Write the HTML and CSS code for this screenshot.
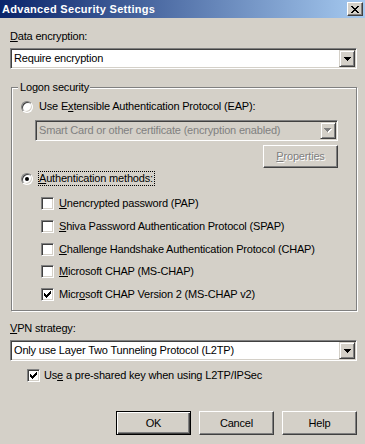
FILE: index.html
```html
<!DOCTYPE html>
<html lang="en">
<head>
<meta charset="utf-8">
<title>Advanced Security Settings</title>
<link rel="stylesheet" href="styles.css">
</head>
<body>
<div class="window">
  <div class="titlebar">
    <span class="title">Advanced Security Settings</span>
    <span class="close">
      <svg width="8" height="7" viewBox="0 0 8 7" shape-rendering="crispEdges"><path fill="#000" d="M0 0h2v1h-2z M6 0h2v1h-2z M1 1h2v1h-2z M5 1h2v1h-2z M2 2h4v1h-4z M3 3h2v1h-2z M2 4h4v1h-4z M1 5h2v1h-2z M5 5h2v1h-2z M0 6h2v1h-2z M6 6h2v1h-2z"/></svg>
    </span>
  </div>
  <div class="client">
    <div class="label"><u>D</u>ata encryption:</div>
    <div class="combo">
      <span class="combo-text">Require encryption</span>
      <span class="combo-btn"><svg width="7" height="4" viewBox="0 0 7 4" shape-rendering="crispEdges"><path fill="#000" d="M0 0h7v1h-7z M1 1h5v1h-5z M2 2h3v1h-3z M3 3h1v1h-1z"/></svg></span>
    </div>

    <div class="group">
      <span class="legend">Logon security</span>
      <div class="opt-row">
        <span class="radio"></span>
        <span>Use E<u>x</u>tensible Authentication Protocol (EAP):</span>
      </div>
      <div class="combo combo-eap disabled">
        <span class="combo-text">Smart Card or other certificate (encryption enabled)</span>
        <span class="combo-btn"><svg width="8" height="5" viewBox="0 0 8 5" shape-rendering="crispEdges"><path fill="#fff" d="M1 1h7v1h-7z M2 2h5v1h-5z M3 3h3v1h-3z M4 4h1v1h-1z"/><path fill="#808080" d="M0 0h7v1h-7z M1 1h5v1h-5z M2 2h3v1h-3z M3 3h1v1h-1z"/></svg></span>
      </div>
      <div class="prop-row">
        <span class="btn disabled"><u>P</u>roperties</span>
      </div>
      <div class="opt-row auth-row">
        <span class="radio checked"></span>
        <span class="focus"><u>A</u>uthentication methods:</span>
      </div>
      <div class="methods">
        <div class="opt-row"><span class="check"></span><span><u>U</u>nencrypted password (PAP)</span></div>
        <div class="opt-row"><span class="check"></span><span><u>S</u>hiva Password Authentication Protocol (SPAP)</span></div>
        <div class="opt-row"><span class="check"></span><span><u>C</u>hallenge Handshake Authentication Protocol (CHAP)</span></div>
        <div class="opt-row"><span class="check"></span><span><u>M</u>icrosoft CHAP (MS-CHAP)</span></div>
        <div class="opt-row"><span class="check"><svg width="7" height="7" viewBox="0 0 7 7" shape-rendering="crispEdges"><path fill="#000" d="M0 2h1v3h-1z M1 3h1v3h-1z M2 4h1v3h-1z M3 3h1v3h-1z M4 2h1v3h-1z M5 1h1v3h-1z M6 0h1v3h-1z"/></svg></span><span>Micr<u>o</u>soft CHAP Version 2 (MS-CHAP v2)</span></div>
      </div>
    </div>

    <div class="label vpn-label"><u>V</u>PN strategy:</div>
    <div class="combo">
      <span class="combo-text">Only use Layer Two Tunneling Protocol (L2TP)</span>
      <span class="combo-btn"><svg width="7" height="4" viewBox="0 0 7 4" shape-rendering="crispEdges"><path fill="#000" d="M0 0h7v1h-7z M1 1h5v1h-5z M2 2h3v1h-3z M3 3h1v1h-1z"/></svg></span>
    </div>
    <div class="opt-row psk-row">
      <span class="check"><svg width="7" height="7" viewBox="0 0 7 7" shape-rendering="crispEdges"><path fill="#000" d="M0 2h1v3h-1z M1 3h1v3h-1z M2 4h1v3h-1z M3 3h1v3h-1z M4 2h1v3h-1z M5 1h1v3h-1z M6 0h1v3h-1z"/></svg></span>
      <span>Us<u>e</u> a pre-shared key when using L2TP/IPSec</span>
    </div>

    <div class="buttons">
      <span class="btn default">OK</span>
      <span class="btn">Cancel</span>
      <span class="btn">Help</span>
    </div>
  </div>
</div>
</body>
</html>
```
FILE: styles.css
```css
html, body {
  margin: 0;
  padding: 0;
  background: #D4D0C8;
}

body {
  font-family: "Liberation Sans", Arial, sans-serif;
  font-size: 11px;
  letter-spacing: -0.18px;
  color: #000;
}

u {
  text-decoration: underline;
  text-underline-offset: 1px;
}

.window {
  width: 365px;
  height: 444px;
  background: #D4D0C8;
  overflow: hidden;
}

.titlebar {
  height: 18px;
  display: flex;
  align-items: center;
  justify-content: space-between;
  padding: 0 2px 0 2px;
  background: linear-gradient(to right, #0A246A, #A6CAF0);
}

.title {
  color: #fff;
  font-weight: bold;
  letter-spacing: 0.3px;
  line-height: 18px;
}

.close {
  width: 16px;
  height: 14px;
  box-sizing: border-box;
  background: #D4D0C8;
  border: 1px solid;
  border-color: #fff #404040 #404040 #fff;
  box-shadow: inset -1px -1px #808080;
  display: flex;
  align-items: center;
  justify-content: center;
}

.client {
  padding: 12px 8px 0 10px;
}

.label {
  height: 13px;
  line-height: 13px;
}

.combo {
  margin-top: 5px;
  height: 21px;
  box-sizing: border-box;
  border: 1px solid;
  border-color: #808080 #fff #fff #808080;
  box-shadow: inset 1px 1px #404040, inset -1px -1px #D4D0C8;
  background: #fff;
  padding: 1px;
  display: flex;
  align-items: center;
}

.combo-text {
  flex: 1;
  padding-left: 2px;
  line-height: 13px;
  white-space: nowrap;
  overflow: hidden;
}

.combo-btn {
  width: 16px;
  height: 17px;
  box-sizing: border-box;
  background: #D4D0C8;
  border: 1px solid;
  border-color: #D4D0C8 #404040 #404040 #D4D0C8;
  box-shadow: inset 1px 1px #fff, inset -1px -1px #808080;
  display: flex;
  align-items: center;
  justify-content: center;
}

.combo-btn svg {
  display: block;
}

.combo.disabled {
  background: #D4D0C8;
  color: #808080;
}

.group {
  position: relative;
  margin: 18px 0 0 1px;
  border: 1px solid #808080;
  box-shadow: 1px 1px 0 #fff, inset 1px 1px 0 #fff;
  padding: 12px 0 9px 9px;
}

.legend {
  position: absolute;
  top: -7px;
  left: 6px;
  padding: 0 1px 0 2px;
  line-height: 13px;
  background: #D4D0C8;
}

.opt-row {
  display: flex;
  align-items: center;
  height: 13px;
  line-height: 13px;
  gap: 6px;
  white-space: nowrap;
}

.radio {
  width: 12px;
  height: 12px;
  box-sizing: border-box;
  border-radius: 50%;
  border: 1px solid;
  border-color: #808080 #fff #fff #808080;
  box-shadow: inset 1px 1px #404040, inset -1px -1px #D4D0C8;
  background: #fff;
  display: flex;
  align-items: center;
  justify-content: center;
  flex: none;
}

.radio.checked::after {
  content: "";
  width: 4px;
  height: 4px;
  border-radius: 50%;
  background: #000;
}

.focus {
  outline: 1px dotted #000;
  outline-offset: 0;
  padding: 0 1px 0 0;
}

.combo-eap {
  margin: 7px 18px 0 14px;
}

.prop-row {
  display: flex;
  justify-content: flex-end;
  margin: 4px 18px 0 0;
}

.auth-row {
  margin-top: 4px;
}

.methods {
  margin-top: 12px;
  padding-left: 20px;
  display: flex;
  flex-direction: column;
  gap: 9.75px;
}

.methods .opt-row {
  gap: 5px;
}

.check {
  width: 13px;
  height: 13px;
  box-sizing: border-box;
  border: 1px solid;
  border-color: #808080 #fff #fff #808080;
  box-shadow: inset 1px 1px #404040, inset -1px -1px #D4D0C8;
  background: #fff;
  display: flex;
  align-items: center;
  justify-content: center;
  flex: none;
}

.check svg {
  display: block;
}

.vpn-label {
  margin-top: 11px;
}

.psk-row {
  margin-top: 8px;
  padding-left: 17px;
  gap: 4px;
}

.buttons {
  margin-top: 29px;
  display: flex;
  justify-content: flex-end;
  gap: 8px;
}

.btn {
  width: 75px;
  height: 23px;
  box-sizing: border-box;
  background: #D4D0C8;
  border: 1px solid;
  border-color: #fff #404040 #404040 #fff;
  box-shadow: inset -1px -1px #808080;
  display: flex;
  align-items: center;
  justify-content: center;
  line-height: 13px;
}

.btn.default {
  border-color: #000;
  box-shadow: inset 1px 1px #fff, inset -1px -1px #404040, inset -2px -2px #808080;
}

.btn.disabled {
  color: #808080;
  text-shadow: 1px 1px 0 #fff;
}

.buttons .btn {
  height: 24px;
}
```
